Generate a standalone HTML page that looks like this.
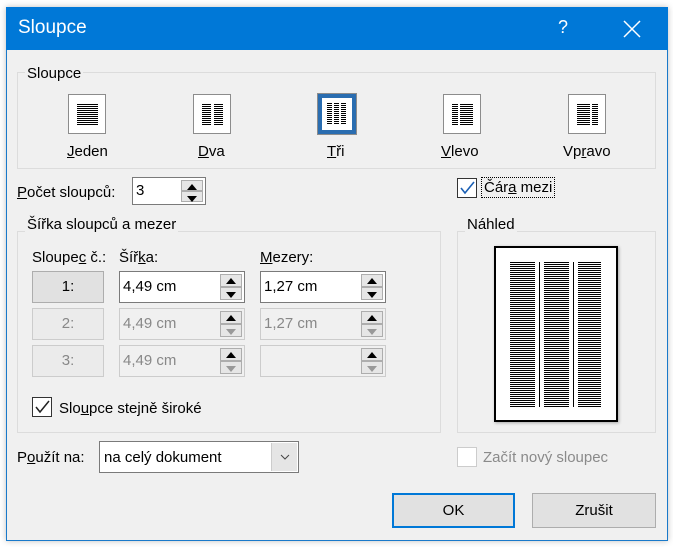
<!DOCTYPE html>
<html><head><meta charset="utf-8"><style>
*{box-sizing:border-box;margin:0;padding:0}
body{width:673px;height:547px;background:#fff;position:relative;font-family:"Liberation Sans",sans-serif;font-size:15px;color:#000;overflow:hidden}
.a{position:absolute}
#dlg{left:6px;top:7px;width:662px;height:534px;background:#f0f0f0;border:1px solid #1979ca;box-shadow:0 0 6px rgba(0,0,0,.25)}
#title{left:6px;top:7px;width:662px;height:43px;background:#0078d7;color:#fff}
.grp{border:1px solid #dcdcdc}
.lbl{background:#f0f0f0;padding:0 2px}
.ico{width:38px;height:40px;background:#fff;border:1px solid #8c8c8c}
.ln{position:absolute;background:repeating-linear-gradient(to bottom,#000 0 1px,transparent 1px 2px)}
.btn{background:#e1e1e1;border:1px solid #adadad;text-align:center}
.inp{background:#fff;border:1px solid #7a7a7a}
.dis{background:#f0f0f0;border:1px solid #ccc;color:#888}
.spin{position:absolute;right:2px;top:2px;width:22px;bottom:2px}
.spin div{height:50%;background:#e6e6e6;border:1px solid #adadad;position:relative}
.up::after{content:"";position:absolute;left:5px;top:3px;border-left:5px solid transparent;border-right:5px solid transparent;border-bottom:6px solid #000}
.dn::after{content:"";position:absolute;left:5px;top:4px;border-left:5px solid transparent;border-right:5px solid transparent;border-top:6px solid #000}
.g .dn::after{border-top-color:#999}
.cb{width:20px;height:20px;background:#fff;border:1px solid #333}
u{text-decoration:underline}
</style></head><body>
<div class="a" id="dlg"></div>
<div class="a" id="title"><span class="a" style="left:12px;top:10px;font-size:19px">Sloupce</span><span class="a" style="left:552px;top:10px;font-size:18px">?</span>
<svg class="a" style="left:617px;top:13px" width="18" height="18"><path d="M1 1L17 17M17 1L1 17" stroke="#fff" stroke-width="1.5"/></svg></div>

<div class="a grp" style="left:17px;top:72px;width:639px;height:97px"></div>
<span class="a lbl" style="left:25px;top:65px">Sloupce</span>

<div class="a ico" style="left:68px;top:94px"><div class="ln" style="left:8px;top:9px;width:21px;height:21px"></div></div>
<div class="a ico" style="left:193px;top:94px"><div class="ln" style="left:8px;top:9px;width:9px;height:21px"></div><div class="ln" style="left:20px;top:9px;width:9px;height:21px"></div></div>
<div class="a ico" style="left:318px;top:94px;border:4px solid #2a6db0;outline:1px solid #8c8c8c"><div class="ln" style="left:5px;top:5px;width:5px;height:21px"></div><div class="ln" style="left:12px;top:5px;width:5px;height:21px"></div><div class="ln" style="left:19px;top:5px;width:5px;height:21px"></div></div>
<div class="a ico" style="left:443px;top:94px"><div class="ln" style="left:8px;top:9px;width:6px;height:21px"></div><div class="ln" style="left:16px;top:9px;width:13px;height:21px"></div></div>
<div class="a ico" style="left:568px;top:94px"><div class="ln" style="left:8px;top:9px;width:13px;height:21px"></div><div class="ln" style="left:23px;top:9px;width:6px;height:21px"></div></div>
<span class="a" style="left:67px;top:143px"><u>J</u>eden</span>
<span class="a" style="left:198px;top:143px"><u>D</u>va</span>
<span class="a" style="left:327px;top:143px"><u>T</u>ři</span>
<span class="a" style="left:441px;top:143px"><u>V</u>levo</span>
<span class="a" style="left:563px;top:143px">Vp<u>r</u>avo</span>

<span class="a" style="left:17px;top:184px"><u>P</u>očet sloupců:</span>
<div class="a inp" style="left:132px;top:177px;width:74px;height:28px"><span class="a" style="left:3px;top:4px">3</span><div class="spin"><div class="up"></div><div class="dn"></div></div></div>

<div class="a cb" style="left:457px;top:178px;border-color:#333"><svg width="18" height="18"><path d="M3 9l4 5 9-11" stroke="#1a5fb4" stroke-width="1.6" fill="none"/></svg></div>
<span class="a" style="left:481px;top:177px;padding:1px 2px;border:1px dotted #000">Čár<u>a</u> mezi</span>

<div class="a grp" style="left:17px;top:231px;width:424px;height:202px"></div>
<span class="a lbl" style="left:25px;top:216px">Šířka sloupců a mezer</span>
<span class="a" style="left:32px;top:249px">Sloupe<u>c</u> č.:</span>
<span class="a" style="left:119px;top:249px">Šíř<u>k</u>a:</span>
<span class="a" style="left:260px;top:249px"><u>M</u>ezery:</span>

<div class="a btn" style="left:32px;top:271px;width:72px;height:32px;line-height:30px">1:</div>
<div class="a btn" style="left:32px;top:308px;width:72px;height:32px;line-height:30px;color:#888;border-color:#ccc;background:#ebebeb">2:</div>
<div class="a btn" style="left:32px;top:345px;width:72px;height:32px;line-height:30px;color:#888;border-color:#ccc;background:#ebebeb">3:</div>

<div class="a inp" style="left:119px;top:271px;width:126px;height:32px"><span class="a" style="left:3px;top:6px">4,49 cm</span><div class="spin"><div class="up"></div><div class="dn"></div></div></div>
<div class="a inp" style="left:260px;top:271px;width:126px;height:32px"><span class="a" style="left:3px;top:6px">1,27 cm</span><div class="spin"><div class="up"></div><div class="dn"></div></div></div>
<div class="a dis g" style="left:119px;top:308px;width:126px;height:32px"><span class="a" style="left:3px;top:6px">4,49 cm</span><div class="spin"><div class="up"></div><div class="dn"></div></div></div>
<div class="a dis g" style="left:260px;top:308px;width:126px;height:32px"><span class="a" style="left:3px;top:6px">1,27 cm</span><div class="spin"><div class="up"></div><div class="dn"></div></div></div>
<div class="a dis g" style="left:119px;top:345px;width:126px;height:32px"><span class="a" style="left:3px;top:6px">4,49 cm</span><div class="spin"><div class="up"></div><div class="dn"></div></div></div>
<div class="a dis g" style="left:260px;top:345px;width:126px;height:32px"><div class="spin"><div class="up"></div><div class="dn"></div></div></div>

<div class="a cb" style="left:32px;top:397px"><svg width="18" height="18"><path d="M3 9l4 5 9-11" stroke="#222" stroke-width="1.5" fill="none"/></svg></div>
<span class="a" style="left:59px;top:400px">Slo<u>u</u>pce stejně široké</span>

<div class="a grp" style="left:457px;top:231px;width:199px;height:202px"></div>
<span class="a lbl" style="left:465px;top:216px">Náhled</span>
<div class="a" style="left:494px;top:246px;width:124px;height:176px;background:#fff;border:2px solid #000;box-shadow:1px 1px 3px rgba(0,0,0,.3)">
<div class="ln" style="left:14px;top:14px;width:25px;height:145px"></div>
<div class="a" style="left:43px;top:14px;width:1px;height:145px;background:#000"></div>
<div class="ln" style="left:48px;top:14px;width:25px;height:145px"></div>
<div class="a" style="left:77px;top:14px;width:1px;height:145px;background:#000"></div>
<div class="ln" style="left:82px;top:14px;width:23px;height:145px"></div>
</div>

<span class="a" style="left:17px;top:449px">P<u>o</u>užít na:</span>
<div class="a inp" style="left:99px;top:441px;width:200px;height:32px"><span class="a" style="left:4px;top:7px">na celý dokument</span>
<div class="a" style="right:1px;top:1px;width:26px;bottom:1px;background:#e5e5e5;border-left:1px solid #ccc"><svg width="26" height="28"><path d="M9 12l4 4 4-4" stroke="#444" fill="none"/></svg></div></div>

<div class="a cb" style="left:457px;top:447px;border-color:#ccc"></div>
<span class="a" style="left:483px;top:449px;color:#8a8a8a">Začít nový sloupec</span>

<div class="a btn" style="left:392px;top:493px;width:123px;height:35px;border:2px solid #0078d7;line-height:31px">OK</div>
<div class="a btn" style="left:532px;top:493px;width:124px;height:35px;line-height:33px">Zrušit</div>
</body></html>
